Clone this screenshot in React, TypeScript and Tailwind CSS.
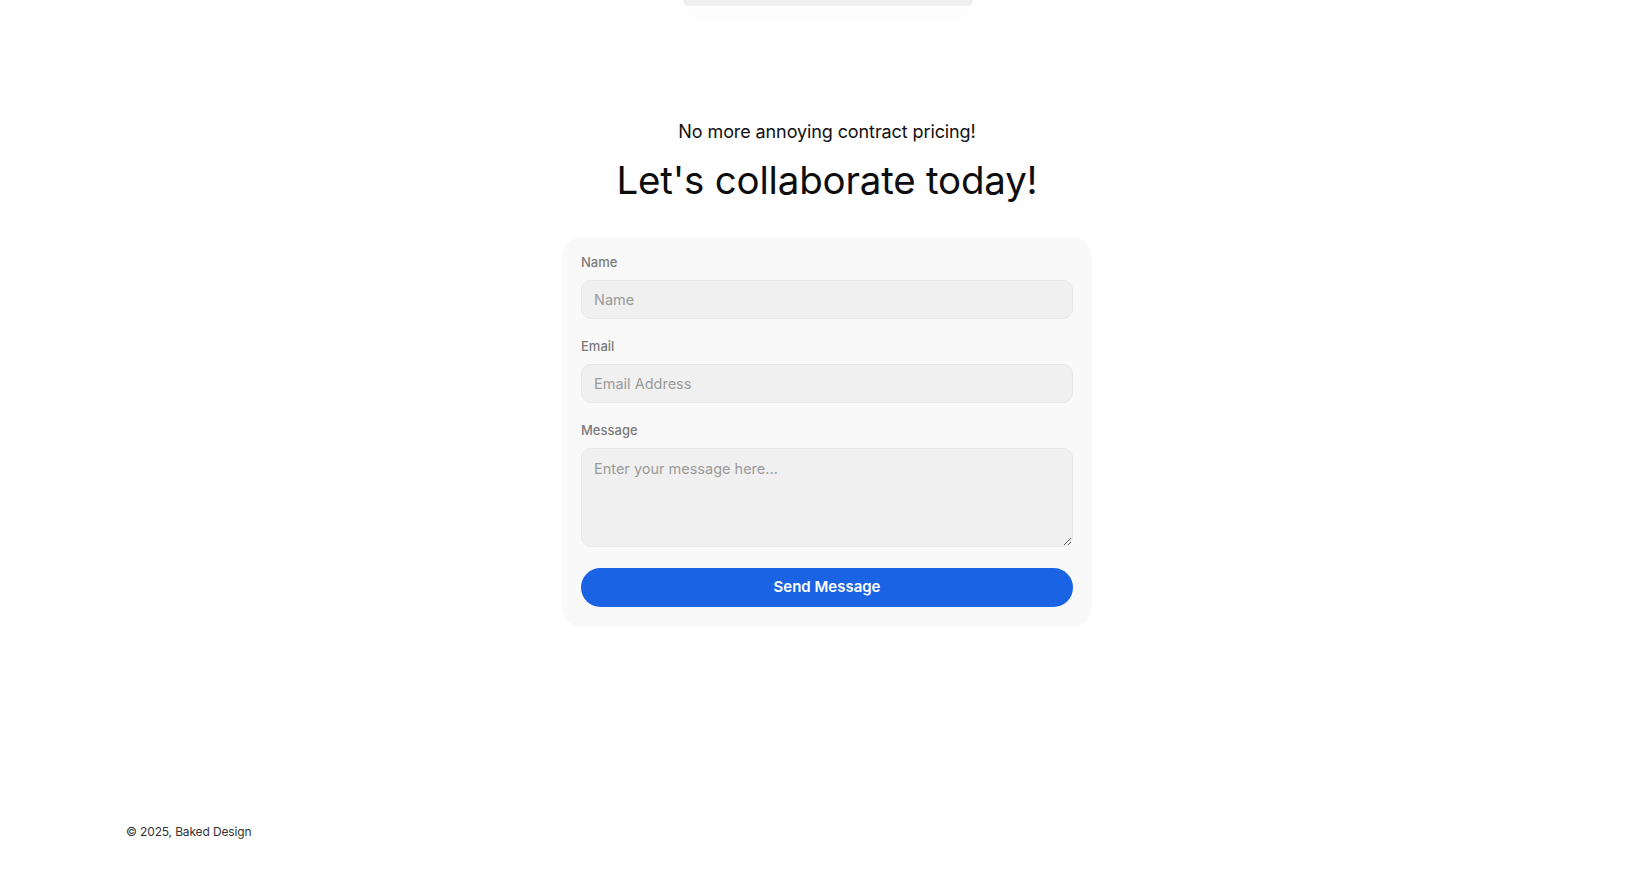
import { useState } from 'react'

const sans = 'font-["Inter","Liberation_Sans",sans-serif]'

function Field({ label, children }: { label: string; children: React.ReactNode }) {
  return (
    <label className="flex flex-col">
      <span className="text-[13px] leading-5 font-medium text-[#7b7b7b]">{label}</span>
      <div className="mt-2">{children}</div>
    </label>
  )
}

const inputCls =
  'w-full h-[39px] rounded-[10px] border border-[#e7e7e7] bg-[#f0f0f0] px-3 text-[14.5px] text-[#222] placeholder:text-[#9a9a9a] outline-none focus:border-[#c9c9c9]'

export default function App() {
  const [form, setForm] = useState({ name: '', email: '', message: '' })

  return (
    <div className={`min-h-screen flex flex-col bg-white ${sans}`}>
      <div className="flex justify-center pl-[10px]">
        <div className="h-[6px] w-[290px] rounded-b-[14px] bg-[#efefef] shadow-[0_8px_20px_rgba(0,0,0,0.05)]" />
      </div>

      <main className="flex-1 flex flex-col items-center pt-[112px] pl-[8px]">
        <p className="text-[18px] leading-7 text-[#111] tracking-[-0.1px]">No more annoying contract pricing!</p>
        <h1 className="mt-[10px] text-[38.5px] leading-[48px] text-[#0d0d0d] tracking-[-0.2px]">Let's collaborate today!</h1>

        <form
          onSubmit={(e) => e.preventDefault()}
          className="mt-[33px] w-[530px] rounded-[20px] bg-[#f9f9f9] px-[19px] pt-[15px] pb-[20px] flex flex-col"
        >
          <Field label="Name">
            <input
              className={inputCls}
              placeholder="Name"
              value={form.name}
              onChange={(e) => setForm({ ...form, name: e.target.value })}
            />
          </Field>
          <div className="mt-[17px]">
            <Field label="Email">
              <input
                type="email"
                className={inputCls}
                placeholder="Email Address"
                value={form.email}
                onChange={(e) => setForm({ ...form, email: e.target.value })}
              />
            </Field>
          </div>
          <div className="mt-[17px]">
            <Field label="Message">
              <textarea
                className="block w-full h-[99px] rounded-[10px] border border-[#e7e7e7] bg-[#f0f0f0] px-3 py-[9px] text-[14.5px] text-[#222] placeholder:text-[#9a9a9a] outline-none focus:border-[#c9c9c9]"
                placeholder="Enter your message here..."
                value={form.message}
                onChange={(e) => setForm({ ...form, message: e.target.value })}
              />
            </Field>
          </div>
          <button
            type="submit"
            className="mt-[21px] h-[39px] w-full rounded-full bg-[#1a63e4] text-[15px] font-semibold text-white"
          >
            Send Message
          </button>
        </form>
      </main>

      <footer className="px-[126px] pb-[28px]">
        <p className="text-[12px] leading-5 text-[#333] tracking-[-0.15px]">© 2025, Baked Design</p>
      </footer>
    </div>
  )
}
